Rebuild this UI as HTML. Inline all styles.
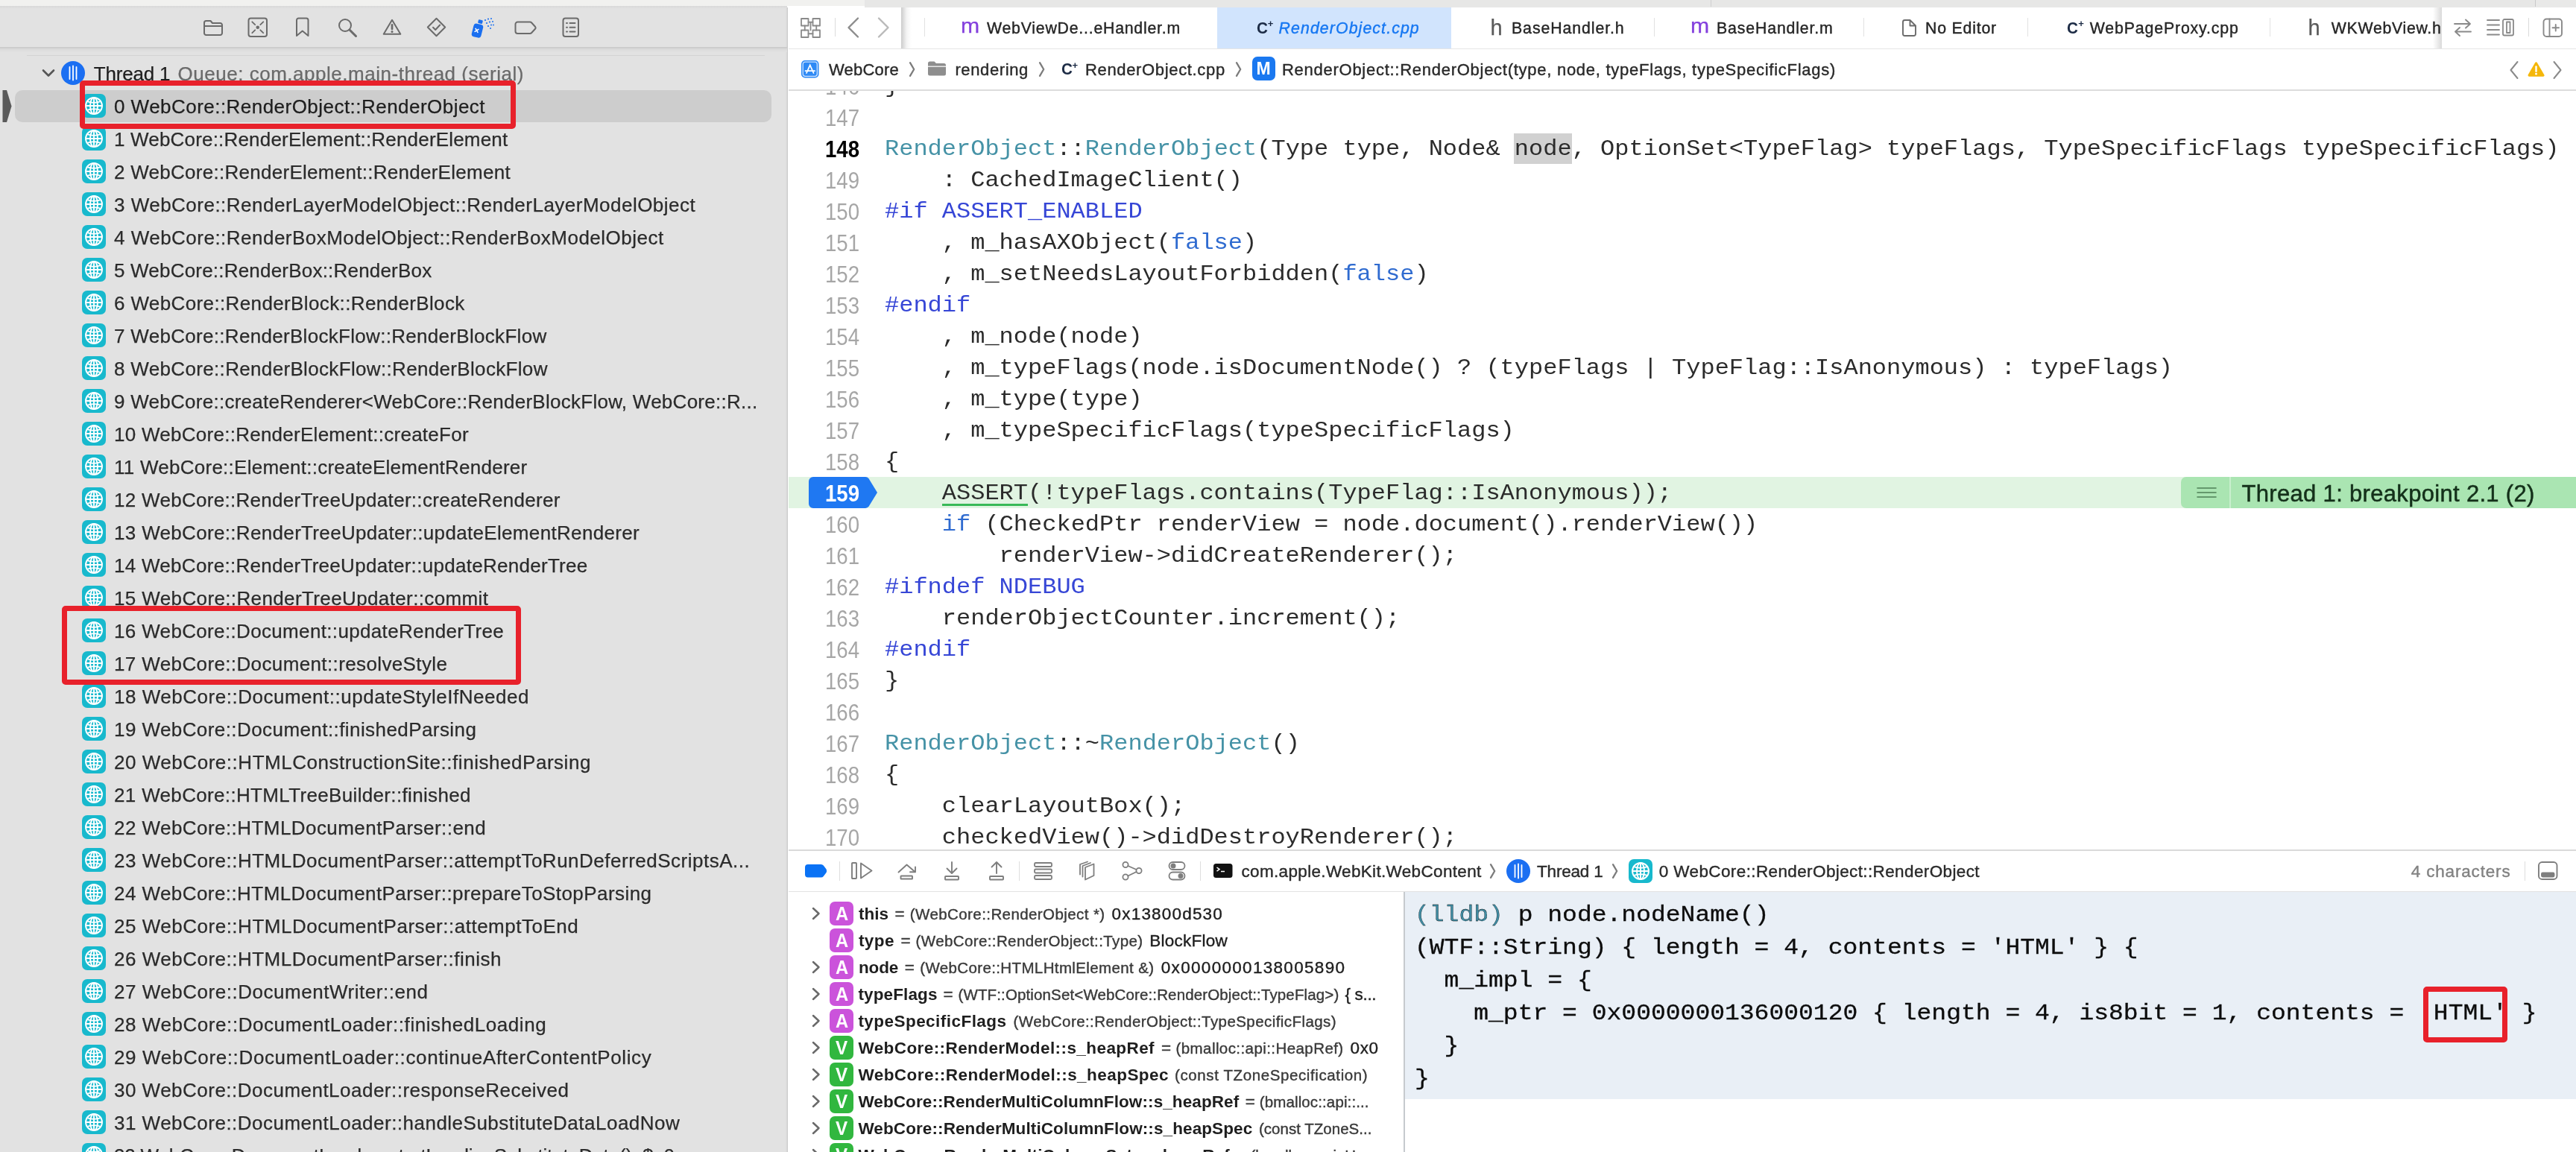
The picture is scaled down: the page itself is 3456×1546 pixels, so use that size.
<!DOCTYPE html>
<html lang="en"><head><meta charset="utf-8"><title>Xcode</title>
<style>
html,body{margin:0;padding:0;}
html{background:#fff;width:3456px;height:1546px;overflow:hidden;}
body{width:3456px;height:1546px;overflow:hidden;position:relative;font-family:'Liberation Sans', sans-serif;}
#root{position:absolute;left:0;top:0;width:3456px;height:1546px;overflow:hidden;background:transparent;will-change:transform;}
#root>div,#root>span,#root>svg{position:absolute;}
span{white-space:pre;display:block;}
span span{display:inline;position:static;}

.cl{left:1187.0px;font-family:'Liberation Mono',monospace;font-size:29px;line-height:36px;color:#2b2b2b;transform:scaleX(1.1033);transform-origin:left;}
.co{left:1897.7px;font-family:'Liberation Mono',monospace;font-size:29px;line-height:38px;color:#0d0d0d;transform:scaleX(1.1383);transform-origin:left;-webkit-text-stroke:0.3px #0d0d0d;}

.k{color:#2f6bd0}.p{color:#3646d6}.c{color:#4592a6}

</style></head><body><div id="root">
<div style="left:0px;top:0px;width:1160px;height:8px;background:#f1f1ef;"></div>
<div style="left:1160px;top:0px;width:2241px;height:10px;background:#e7e7e6;"></div>
<div style="left:3401px;top:0px;width:55px;height:10px;background:#e9e9e8;"></div>
<div style="left:3401px;top:0px;width:1px;height:9px;background:#c9c9c9;"></div>
<div style="left:2295px;top:0px;width:1px;height:9px;background:#d0d0d0;"></div>
<div style="left:0px;top:8px;width:1056px;height:1538px;background:#e2e2e2;"></div>
<div style="left:0px;top:8px;width:1056px;height:4px;background:linear-gradient(#d8d8d8,#e2e2e2);"></div>
<div style="left:1054px;top:10px;width:2px;height:1536px;background:linear-gradient(90deg,#e2e2e2,#d6d6d6);"></div>
<div style="left:1056px;top:10px;width:1px;height:1536px;background:#cbcbcb;"></div>
<div style="left:0px;top:63px;width:1056px;height:2px;background:#cdcdcd;"></div>
<div style="left:0px;top:65px;width:1056px;height:5px;background:linear-gradient(#d8d8d8,#e2e2e2);"></div>
<div style="left:36px;top:74px;width:990px;height:1px;background:#d3d3d3;"></div>
<svg style="left:272px;top:26px;" width="28" height="23" viewBox="0 0 28 23"><g fill="none" stroke="#6b6b6b" stroke-width="2.0" stroke-linecap="round" stroke-linejoin="round"><path d="M2 6.5 V18.5 a2.5 2.5 0 0 0 2.5 2.5 H23.5 a2.5 2.5 0 0 0 2.5 -2.5 V7.5 a2.5 2.5 0 0 0 -2.5 -2.5 H13 l-2.5 -3 H4.5 a2.5 2.5 0 0 0 -2.5 2.5 Z M2 9 H26"/></g></svg>
<svg style="left:332px;top:23px;" width="28" height="28" viewBox="0 0 28 28"><g fill="none" stroke="#6b6b6b" stroke-width="2.0" stroke-linecap="round" stroke-linejoin="round"><rect x="1.5" y="1.5" width="24.5" height="24.5" rx="3"/><path d="M6.3 6.3 l3.9 3.9 M21.2 6.3 l-3.9 3.9 M6.3 21.2 l3.9 -3.9 M21.2 21.2 l-3.9 -3.9" stroke-width="1.8"/><circle cx="13.75" cy="13.75" r="2.3" fill="#6b6b6b" stroke="none"/></g></svg>
<svg style="left:396px;top:23px;" width="20" height="28" viewBox="0 0 20 28"><g fill="none" stroke="#6b6b6b" stroke-width="2.0" stroke-linecap="round" stroke-linejoin="round"><path d="M2 4 a2.5 2.5 0 0 1 2.5 -2.5 H15 a2.5 2.5 0 0 1 2.5 2.5 V25 l-7.75 -6.5 L2 25 Z"/></g></svg>
<svg style="left:453px;top:24px;" width="27" height="27" viewBox="0 0 27 27"><g fill="none" stroke="#6b6b6b" stroke-width="2.0" stroke-linecap="round" stroke-linejoin="round"><circle cx="10" cy="10" r="8"/><path d="M16 16 l8.5 8.5" stroke-width="3"/></g></svg>
<svg style="left:513px;top:24px;" width="27" height="25" viewBox="0 0 27 25"><g fill="none" stroke="#6b6b6b" stroke-width="2.0" stroke-linecap="round" stroke-linejoin="round"><path d="M13 2.8 L24.3 21.8 H1.7 Z"/><path d="M13 9.3 v5.6" stroke-width="2.7"/><circle cx="13" cy="18.6" r="1.5" fill="#6b6b6b" stroke="none"/></g></svg>
<svg style="left:572px;top:23px;" width="28" height="28" viewBox="0 0 28 28"><g fill="none" stroke="#6b6b6b" stroke-width="2.0" stroke-linecap="round" stroke-linejoin="round"><path d="M13.5 1.8 L25.2 13.5 L13.5 25.2 L1.8 13.5 Z"/><path d="M9 13.8 l3.2 3.2 l6 -6.5"/></g></svg>
<svg style="left:631px;top:23px;" width="34" height="28" viewBox="0 0 34 28"><g fill="#1a6ff0"><rect x="3" y="9" width="13" height="18" rx="3.5" transform="rotate(14 9 18)"/><rect x="10.5" y="3.5" width="6" height="5" rx="1" transform="rotate(14 13 6)"/><circle cx="20" cy="4" r="1.1"/><circle cx="24" cy="2.5" r="1.1"/><circle cx="28" cy="2" r="1"/><circle cx="22" cy="8" r="1.1"/><circle cx="26" cy="6.5" r="1.1"/><circle cx="30" cy="6" r="1"/><circle cx="24" cy="12" r="1.1"/><circle cx="28" cy="10.5" r="1"/><circle cx="31" cy="10.5" r="0.9"/><circle cx="27" cy="15" r="1"/></g><path d="M6.5 16 l4 4 M10.5 16 l-4 4" stroke="#fff" stroke-width="1.6" stroke-linecap="round" transform="rotate(14 9 18)"/></svg>
<svg style="left:690px;top:28px;" width="32" height="19" viewBox="0 0 32 19"><g fill="none" stroke="#6b6b6b" stroke-width="2.0" stroke-linecap="round" stroke-linejoin="round"><path d="M4.5 1.5 H21 a3 3 0 0 1 2.2 1 l5 5.5 a2 2 0 0 1 0 2.5 l-5 5.5 a3 3 0 0 1 -2.2 1 H4.5 a3 3 0 0 1 -3 -3 V4.5 a3 3 0 0 1 3 -3 Z"/></g></svg>
<svg style="left:754px;top:23px;" width="26" height="28" viewBox="0 0 26 28"><g fill="none" stroke="#6b6b6b" stroke-width="2.0" stroke-linecap="round" stroke-linejoin="round"><rect x="1.5" y="1.5" width="20.5" height="24.5" rx="3"/><path d="M6 8 h1 M10.5 8 h7 M6 13.75 h1 M10.5 13.75 h7 M6 19.5 h1 M10.5 19.5 h7"/></g></svg>
<svg style="left:55px;top:90px;" width="20" height="16" viewBox="0 0 20 16"><g fill="none" stroke="#555" stroke-width="2.6" stroke-linecap="round" stroke-linejoin="round"><path d="M3 4.5 l7 7 l7 -7"/></g></svg>
<svg style="left:82px;top:82.4px;" width="32" height="32" viewBox="0 0 32 32"><circle cx="16" cy="16" r="16" fill="#1b6ff2"/><path d="M11.5 8 v16 M16 6.5 v19 M20.5 8 v16" stroke="#fff" stroke-width="1.8" stroke-linecap="round"/></svg>
<span style="left:125.8px;top:81.5px;font-size:26px;line-height:34px;color:#1e1e1e;letter-spacing:-0.197px;-webkit-text-stroke:0.25px;">Thread 1</span>
<span style="left:238.5px;top:81.5px;font-size:26px;line-height:34px;color:#6a6a6a;letter-spacing:0.524px;-webkit-text-stroke:0.25px;">Queue: com.apple.main-thread (serial)</span>
<div style="left:20px;top:120.5px;width:1015px;height:43.5px;background:#cdcdcd;border-radius:10px;"></div>
<svg style="left:2px;top:120px;" width="16" height="45" viewBox="0 0 16 45"><path d="M1.5 1 H7 L13.5 22.5 L7 44 H1.5 Z" fill="#5a5a5a"/></svg>
<svg style="left:110px;top:126.4px;" width="32" height="32" viewBox="0 0 32 32"><rect width="32" height="32" rx="7" fill="#18b9cd"/><g fill="none" stroke="#fff" stroke-width="1.9"><circle cx="16" cy="16" r="11"/><ellipse cx="16" cy="16" rx="5" ry="11"/><path d="M5 16 H27 M16 5 V27 M7 10.2 Q16 13.6 25 10.2 M7 21.8 Q16 18.4 25 21.8"/></g></svg>
<span style="left:153.0px;top:125.5px;font-size:26px;line-height:34px;color:#1e1e1e;letter-spacing:0.466px;-webkit-text-stroke:0.25px;">0 WebCore::RenderObject::RenderObject</span>
<svg style="left:110px;top:170.4px;" width="32" height="32" viewBox="0 0 32 32"><rect width="32" height="32" rx="7" fill="#18b9cd"/><g fill="none" stroke="#fff" stroke-width="1.9"><circle cx="16" cy="16" r="11"/><ellipse cx="16" cy="16" rx="5" ry="11"/><path d="M5 16 H27 M16 5 V27 M7 10.2 Q16 13.6 25 10.2 M7 21.8 Q16 18.4 25 21.8"/></g></svg>
<span style="left:153.0px;top:169.5px;font-size:26px;line-height:34px;color:#2b2b2b;letter-spacing:0.184px;-webkit-text-stroke:0.25px;">1 WebCore::RenderElement::RenderElement</span>
<svg style="left:110px;top:214.4px;" width="32" height="32" viewBox="0 0 32 32"><rect width="32" height="32" rx="7" fill="#18b9cd"/><g fill="none" stroke="#fff" stroke-width="1.9"><circle cx="16" cy="16" r="11"/><ellipse cx="16" cy="16" rx="5" ry="11"/><path d="M5 16 H27 M16 5 V27 M7 10.2 Q16 13.6 25 10.2 M7 21.8 Q16 18.4 25 21.8"/></g></svg>
<span style="left:153.0px;top:213.5px;font-size:26px;line-height:34px;color:#2b2b2b;letter-spacing:0.273px;-webkit-text-stroke:0.25px;">2 WebCore::RenderElement::RenderElement</span>
<svg style="left:110px;top:258.4px;" width="32" height="32" viewBox="0 0 32 32"><rect width="32" height="32" rx="7" fill="#18b9cd"/><g fill="none" stroke="#fff" stroke-width="1.9"><circle cx="16" cy="16" r="11"/><ellipse cx="16" cy="16" rx="5" ry="11"/><path d="M5 16 H27 M16 5 V27 M7 10.2 Q16 13.6 25 10.2 M7 21.8 Q16 18.4 25 21.8"/></g></svg>
<span style="left:153.0px;top:257.5px;font-size:26px;line-height:34px;color:#2b2b2b;letter-spacing:0.487px;-webkit-text-stroke:0.25px;">3 WebCore::RenderLayerModelObject::RenderLayerModelObject</span>
<svg style="left:110px;top:302.4px;" width="32" height="32" viewBox="0 0 32 32"><rect width="32" height="32" rx="7" fill="#18b9cd"/><g fill="none" stroke="#fff" stroke-width="1.9"><circle cx="16" cy="16" r="11"/><ellipse cx="16" cy="16" rx="5" ry="11"/><path d="M5 16 H27 M16 5 V27 M7 10.2 Q16 13.6 25 10.2 M7 21.8 Q16 18.4 25 21.8"/></g></svg>
<span style="left:153.0px;top:301.5px;font-size:26px;line-height:34px;color:#2b2b2b;letter-spacing:0.483px;-webkit-text-stroke:0.25px;">4 WebCore::RenderBoxModelObject::RenderBoxModelObject</span>
<svg style="left:110px;top:346.4px;" width="32" height="32" viewBox="0 0 32 32"><rect width="32" height="32" rx="7" fill="#18b9cd"/><g fill="none" stroke="#fff" stroke-width="1.9"><circle cx="16" cy="16" r="11"/><ellipse cx="16" cy="16" rx="5" ry="11"/><path d="M5 16 H27 M16 5 V27 M7 10.2 Q16 13.6 25 10.2 M7 21.8 Q16 18.4 25 21.8"/></g></svg>
<span style="left:153.0px;top:345.5px;font-size:26px;line-height:34px;color:#2b2b2b;letter-spacing:0.204px;-webkit-text-stroke:0.25px;">5 WebCore::RenderBox::RenderBox</span>
<svg style="left:110px;top:390.4px;" width="32" height="32" viewBox="0 0 32 32"><rect width="32" height="32" rx="7" fill="#18b9cd"/><g fill="none" stroke="#fff" stroke-width="1.9"><circle cx="16" cy="16" r="11"/><ellipse cx="16" cy="16" rx="5" ry="11"/><path d="M5 16 H27 M16 5 V27 M7 10.2 Q16 13.6 25 10.2 M7 21.8 Q16 18.4 25 21.8"/></g></svg>
<span style="left:153.0px;top:389.5px;font-size:26px;line-height:34px;color:#2b2b2b;letter-spacing:0.373px;-webkit-text-stroke:0.25px;">6 WebCore::RenderBlock::RenderBlock</span>
<svg style="left:110px;top:434.4px;" width="32" height="32" viewBox="0 0 32 32"><rect width="32" height="32" rx="7" fill="#18b9cd"/><g fill="none" stroke="#fff" stroke-width="1.9"><circle cx="16" cy="16" r="11"/><ellipse cx="16" cy="16" rx="5" ry="11"/><path d="M5 16 H27 M16 5 V27 M7 10.2 Q16 13.6 25 10.2 M7 21.8 Q16 18.4 25 21.8"/></g></svg>
<span style="left:153.0px;top:433.5px;font-size:26px;line-height:34px;color:#2b2b2b;letter-spacing:0.304px;-webkit-text-stroke:0.25px;">7 WebCore::RenderBlockFlow::RenderBlockFlow</span>
<svg style="left:110px;top:478.4px;" width="32" height="32" viewBox="0 0 32 32"><rect width="32" height="32" rx="7" fill="#18b9cd"/><g fill="none" stroke="#fff" stroke-width="1.9"><circle cx="16" cy="16" r="11"/><ellipse cx="16" cy="16" rx="5" ry="11"/><path d="M5 16 H27 M16 5 V27 M7 10.2 Q16 13.6 25 10.2 M7 21.8 Q16 18.4 25 21.8"/></g></svg>
<span style="left:153.0px;top:477.5px;font-size:26px;line-height:34px;color:#2b2b2b;letter-spacing:0.334px;-webkit-text-stroke:0.25px;">8 WebCore::RenderBlockFlow::RenderBlockFlow</span>
<svg style="left:110px;top:522.4px;" width="32" height="32" viewBox="0 0 32 32"><rect width="32" height="32" rx="7" fill="#18b9cd"/><g fill="none" stroke="#fff" stroke-width="1.9"><circle cx="16" cy="16" r="11"/><ellipse cx="16" cy="16" rx="5" ry="11"/><path d="M5 16 H27 M16 5 V27 M7 10.2 Q16 13.6 25 10.2 M7 21.8 Q16 18.4 25 21.8"/></g></svg>
<span style="left:153.0px;top:521.5px;font-size:26px;line-height:34px;color:#2b2b2b;letter-spacing:0.268px;-webkit-text-stroke:0.25px;">9 WebCore::createRenderer&lt;WebCore::RenderBlockFlow, WebCore::R...</span>
<svg style="left:110px;top:566.4px;" width="32" height="32" viewBox="0 0 32 32"><rect width="32" height="32" rx="7" fill="#18b9cd"/><g fill="none" stroke="#fff" stroke-width="1.9"><circle cx="16" cy="16" r="11"/><ellipse cx="16" cy="16" rx="5" ry="11"/><path d="M5 16 H27 M16 5 V27 M7 10.2 Q16 13.6 25 10.2 M7 21.8 Q16 18.4 25 21.8"/></g></svg>
<span style="left:153.0px;top:565.5px;font-size:26px;line-height:34px;color:#2b2b2b;letter-spacing:0.266px;-webkit-text-stroke:0.25px;">10 WebCore::RenderElement::createFor</span>
<svg style="left:110px;top:610.4px;" width="32" height="32" viewBox="0 0 32 32"><rect width="32" height="32" rx="7" fill="#18b9cd"/><g fill="none" stroke="#fff" stroke-width="1.9"><circle cx="16" cy="16" r="11"/><ellipse cx="16" cy="16" rx="5" ry="11"/><path d="M5 16 H27 M16 5 V27 M7 10.2 Q16 13.6 25 10.2 M7 21.8 Q16 18.4 25 21.8"/></g></svg>
<span style="left:153.0px;top:609.5px;font-size:26px;line-height:34px;color:#2b2b2b;letter-spacing:0.253px;-webkit-text-stroke:0.25px;">11 WebCore::Element::createElementRenderer</span>
<svg style="left:110px;top:654.4px;" width="32" height="32" viewBox="0 0 32 32"><rect width="32" height="32" rx="7" fill="#18b9cd"/><g fill="none" stroke="#fff" stroke-width="1.9"><circle cx="16" cy="16" r="11"/><ellipse cx="16" cy="16" rx="5" ry="11"/><path d="M5 16 H27 M16 5 V27 M7 10.2 Q16 13.6 25 10.2 M7 21.8 Q16 18.4 25 21.8"/></g></svg>
<span style="left:153.0px;top:653.5px;font-size:26px;line-height:34px;color:#2b2b2b;letter-spacing:0.298px;-webkit-text-stroke:0.25px;">12 WebCore::RenderTreeUpdater::createRenderer</span>
<svg style="left:110px;top:698.4px;" width="32" height="32" viewBox="0 0 32 32"><rect width="32" height="32" rx="7" fill="#18b9cd"/><g fill="none" stroke="#fff" stroke-width="1.9"><circle cx="16" cy="16" r="11"/><ellipse cx="16" cy="16" rx="5" ry="11"/><path d="M5 16 H27 M16 5 V27 M7 10.2 Q16 13.6 25 10.2 M7 21.8 Q16 18.4 25 21.8"/></g></svg>
<span style="left:153.0px;top:697.5px;font-size:26px;line-height:34px;color:#2b2b2b;letter-spacing:0.328px;-webkit-text-stroke:0.25px;">13 WebCore::RenderTreeUpdater::updateElementRenderer</span>
<svg style="left:110px;top:742.4px;" width="32" height="32" viewBox="0 0 32 32"><rect width="32" height="32" rx="7" fill="#18b9cd"/><g fill="none" stroke="#fff" stroke-width="1.9"><circle cx="16" cy="16" r="11"/><ellipse cx="16" cy="16" rx="5" ry="11"/><path d="M5 16 H27 M16 5 V27 M7 10.2 Q16 13.6 25 10.2 M7 21.8 Q16 18.4 25 21.8"/></g></svg>
<span style="left:153.0px;top:741.5px;font-size:26px;line-height:34px;color:#2b2b2b;letter-spacing:0.290px;-webkit-text-stroke:0.25px;">14 WebCore::RenderTreeUpdater::updateRenderTree</span>
<svg style="left:110px;top:786.4px;" width="32" height="32" viewBox="0 0 32 32"><rect width="32" height="32" rx="7" fill="#18b9cd"/><g fill="none" stroke="#fff" stroke-width="1.9"><circle cx="16" cy="16" r="11"/><ellipse cx="16" cy="16" rx="5" ry="11"/><path d="M5 16 H27 M16 5 V27 M7 10.2 Q16 13.6 25 10.2 M7 21.8 Q16 18.4 25 21.8"/></g></svg>
<span style="left:153.0px;top:785.5px;font-size:26px;line-height:34px;color:#2b2b2b;letter-spacing:0.377px;-webkit-text-stroke:0.25px;">15 WebCore::RenderTreeUpdater::commit</span>
<svg style="left:110px;top:830.4px;" width="32" height="32" viewBox="0 0 32 32"><rect width="32" height="32" rx="7" fill="#18b9cd"/><g fill="none" stroke="#fff" stroke-width="1.9"><circle cx="16" cy="16" r="11"/><ellipse cx="16" cy="16" rx="5" ry="11"/><path d="M5 16 H27 M16 5 V27 M7 10.2 Q16 13.6 25 10.2 M7 21.8 Q16 18.4 25 21.8"/></g></svg>
<span style="left:153.0px;top:829.5px;font-size:26px;line-height:34px;color:#2b2b2b;letter-spacing:0.342px;-webkit-text-stroke:0.25px;">16 WebCore::Document::updateRenderTree</span>
<svg style="left:110px;top:874.4px;" width="32" height="32" viewBox="0 0 32 32"><rect width="32" height="32" rx="7" fill="#18b9cd"/><g fill="none" stroke="#fff" stroke-width="1.9"><circle cx="16" cy="16" r="11"/><ellipse cx="16" cy="16" rx="5" ry="11"/><path d="M5 16 H27 M16 5 V27 M7 10.2 Q16 13.6 25 10.2 M7 21.8 Q16 18.4 25 21.8"/></g></svg>
<span style="left:153.0px;top:873.5px;font-size:26px;line-height:34px;color:#2b2b2b;letter-spacing:0.376px;-webkit-text-stroke:0.25px;">17 WebCore::Document::resolveStyle</span>
<svg style="left:110px;top:918.4px;" width="32" height="32" viewBox="0 0 32 32"><rect width="32" height="32" rx="7" fill="#18b9cd"/><g fill="none" stroke="#fff" stroke-width="1.9"><circle cx="16" cy="16" r="11"/><ellipse cx="16" cy="16" rx="5" ry="11"/><path d="M5 16 H27 M16 5 V27 M7 10.2 Q16 13.6 25 10.2 M7 21.8 Q16 18.4 25 21.8"/></g></svg>
<span style="left:153.0px;top:917.5px;font-size:26px;line-height:34px;color:#2b2b2b;letter-spacing:0.519px;-webkit-text-stroke:0.25px;">18 WebCore::Document::updateStyleIfNeeded</span>
<svg style="left:110px;top:962.4px;" width="32" height="32" viewBox="0 0 32 32"><rect width="32" height="32" rx="7" fill="#18b9cd"/><g fill="none" stroke="#fff" stroke-width="1.9"><circle cx="16" cy="16" r="11"/><ellipse cx="16" cy="16" rx="5" ry="11"/><path d="M5 16 H27 M16 5 V27 M7 10.2 Q16 13.6 25 10.2 M7 21.8 Q16 18.4 25 21.8"/></g></svg>
<span style="left:153.0px;top:961.5px;font-size:26px;line-height:34px;color:#2b2b2b;letter-spacing:0.423px;-webkit-text-stroke:0.25px;">19 WebCore::Document::finishedParsing</span>
<svg style="left:110px;top:1006.4px;" width="32" height="32" viewBox="0 0 32 32"><rect width="32" height="32" rx="7" fill="#18b9cd"/><g fill="none" stroke="#fff" stroke-width="1.9"><circle cx="16" cy="16" r="11"/><ellipse cx="16" cy="16" rx="5" ry="11"/><path d="M5 16 H27 M16 5 V27 M7 10.2 Q16 13.6 25 10.2 M7 21.8 Q16 18.4 25 21.8"/></g></svg>
<span style="left:153.0px;top:1005.5px;font-size:26px;line-height:34px;color:#2b2b2b;letter-spacing:0.535px;-webkit-text-stroke:0.25px;">20 WebCore::HTMLConstructionSite::finishedParsing</span>
<svg style="left:110px;top:1050.4px;" width="32" height="32" viewBox="0 0 32 32"><rect width="32" height="32" rx="7" fill="#18b9cd"/><g fill="none" stroke="#fff" stroke-width="1.9"><circle cx="16" cy="16" r="11"/><ellipse cx="16" cy="16" rx="5" ry="11"/><path d="M5 16 H27 M16 5 V27 M7 10.2 Q16 13.6 25 10.2 M7 21.8 Q16 18.4 25 21.8"/></g></svg>
<span style="left:153.0px;top:1049.5px;font-size:26px;line-height:34px;color:#2b2b2b;letter-spacing:0.338px;-webkit-text-stroke:0.25px;">21 WebCore::HTMLTreeBuilder::finished</span>
<svg style="left:110px;top:1094.4px;" width="32" height="32" viewBox="0 0 32 32"><rect width="32" height="32" rx="7" fill="#18b9cd"/><g fill="none" stroke="#fff" stroke-width="1.9"><circle cx="16" cy="16" r="11"/><ellipse cx="16" cy="16" rx="5" ry="11"/><path d="M5 16 H27 M16 5 V27 M7 10.2 Q16 13.6 25 10.2 M7 21.8 Q16 18.4 25 21.8"/></g></svg>
<span style="left:153.0px;top:1093.5px;font-size:26px;line-height:34px;color:#2b2b2b;letter-spacing:0.442px;-webkit-text-stroke:0.25px;">22 WebCore::HTMLDocumentParser::end</span>
<svg style="left:110px;top:1138.4px;" width="32" height="32" viewBox="0 0 32 32"><rect width="32" height="32" rx="7" fill="#18b9cd"/><g fill="none" stroke="#fff" stroke-width="1.9"><circle cx="16" cy="16" r="11"/><ellipse cx="16" cy="16" rx="5" ry="11"/><path d="M5 16 H27 M16 5 V27 M7 10.2 Q16 13.6 25 10.2 M7 21.8 Q16 18.4 25 21.8"/></g></svg>
<span style="left:153.0px;top:1137.5px;font-size:26px;line-height:34px;color:#2b2b2b;letter-spacing:0.499px;-webkit-text-stroke:0.25px;">23 WebCore::HTMLDocumentParser::attemptToRunDeferredScriptsA...</span>
<svg style="left:110px;top:1182.4px;" width="32" height="32" viewBox="0 0 32 32"><rect width="32" height="32" rx="7" fill="#18b9cd"/><g fill="none" stroke="#fff" stroke-width="1.9"><circle cx="16" cy="16" r="11"/><ellipse cx="16" cy="16" rx="5" ry="11"/><path d="M5 16 H27 M16 5 V27 M7 10.2 Q16 13.6 25 10.2 M7 21.8 Q16 18.4 25 21.8"/></g></svg>
<span style="left:153.0px;top:1181.5px;font-size:26px;line-height:34px;color:#2b2b2b;letter-spacing:0.432px;-webkit-text-stroke:0.25px;">24 WebCore::HTMLDocumentParser::prepareToStopParsing</span>
<svg style="left:110px;top:1226.4px;" width="32" height="32" viewBox="0 0 32 32"><rect width="32" height="32" rx="7" fill="#18b9cd"/><g fill="none" stroke="#fff" stroke-width="1.9"><circle cx="16" cy="16" r="11"/><ellipse cx="16" cy="16" rx="5" ry="11"/><path d="M5 16 H27 M16 5 V27 M7 10.2 Q16 13.6 25 10.2 M7 21.8 Q16 18.4 25 21.8"/></g></svg>
<span style="left:153.0px;top:1225.5px;font-size:26px;line-height:34px;color:#2b2b2b;letter-spacing:0.514px;-webkit-text-stroke:0.25px;">25 WebCore::HTMLDocumentParser::attemptToEnd</span>
<svg style="left:110px;top:1270.4px;" width="32" height="32" viewBox="0 0 32 32"><rect width="32" height="32" rx="7" fill="#18b9cd"/><g fill="none" stroke="#fff" stroke-width="1.9"><circle cx="16" cy="16" r="11"/><ellipse cx="16" cy="16" rx="5" ry="11"/><path d="M5 16 H27 M16 5 V27 M7 10.2 Q16 13.6 25 10.2 M7 21.8 Q16 18.4 25 21.8"/></g></svg>
<span style="left:153.0px;top:1269.5px;font-size:26px;line-height:34px;color:#2b2b2b;letter-spacing:0.502px;-webkit-text-stroke:0.25px;">26 WebCore::HTMLDocumentParser::finish</span>
<svg style="left:110px;top:1314.4px;" width="32" height="32" viewBox="0 0 32 32"><rect width="32" height="32" rx="7" fill="#18b9cd"/><g fill="none" stroke="#fff" stroke-width="1.9"><circle cx="16" cy="16" r="11"/><ellipse cx="16" cy="16" rx="5" ry="11"/><path d="M5 16 H27 M16 5 V27 M7 10.2 Q16 13.6 25 10.2 M7 21.8 Q16 18.4 25 21.8"/></g></svg>
<span style="left:153.0px;top:1313.5px;font-size:26px;line-height:34px;color:#2b2b2b;letter-spacing:0.526px;-webkit-text-stroke:0.25px;">27 WebCore::DocumentWriter::end</span>
<svg style="left:110px;top:1358.4px;" width="32" height="32" viewBox="0 0 32 32"><rect width="32" height="32" rx="7" fill="#18b9cd"/><g fill="none" stroke="#fff" stroke-width="1.9"><circle cx="16" cy="16" r="11"/><ellipse cx="16" cy="16" rx="5" ry="11"/><path d="M5 16 H27 M16 5 V27 M7 10.2 Q16 13.6 25 10.2 M7 21.8 Q16 18.4 25 21.8"/></g></svg>
<span style="left:153.0px;top:1357.5px;font-size:26px;line-height:34px;color:#2b2b2b;letter-spacing:0.563px;-webkit-text-stroke:0.25px;">28 WebCore::DocumentLoader::finishedLoading</span>
<svg style="left:110px;top:1402.4px;" width="32" height="32" viewBox="0 0 32 32"><rect width="32" height="32" rx="7" fill="#18b9cd"/><g fill="none" stroke="#fff" stroke-width="1.9"><circle cx="16" cy="16" r="11"/><ellipse cx="16" cy="16" rx="5" ry="11"/><path d="M5 16 H27 M16 5 V27 M7 10.2 Q16 13.6 25 10.2 M7 21.8 Q16 18.4 25 21.8"/></g></svg>
<span style="left:153.0px;top:1401.5px;font-size:26px;line-height:34px;color:#2b2b2b;letter-spacing:0.628px;-webkit-text-stroke:0.25px;">29 WebCore::DocumentLoader::continueAfterContentPolicy</span>
<svg style="left:110px;top:1446.4px;" width="32" height="32" viewBox="0 0 32 32"><rect width="32" height="32" rx="7" fill="#18b9cd"/><g fill="none" stroke="#fff" stroke-width="1.9"><circle cx="16" cy="16" r="11"/><ellipse cx="16" cy="16" rx="5" ry="11"/><path d="M5 16 H27 M16 5 V27 M7 10.2 Q16 13.6 25 10.2 M7 21.8 Q16 18.4 25 21.8"/></g></svg>
<span style="left:153.0px;top:1445.5px;font-size:26px;line-height:34px;color:#2b2b2b;letter-spacing:0.484px;-webkit-text-stroke:0.25px;">30 WebCore::DocumentLoader::responseReceived</span>
<svg style="left:110px;top:1490.4px;" width="32" height="32" viewBox="0 0 32 32"><rect width="32" height="32" rx="7" fill="#18b9cd"/><g fill="none" stroke="#fff" stroke-width="1.9"><circle cx="16" cy="16" r="11"/><ellipse cx="16" cy="16" rx="5" ry="11"/><path d="M5 16 H27 M16 5 V27 M7 10.2 Q16 13.6 25 10.2 M7 21.8 Q16 18.4 25 21.8"/></g></svg>
<span style="left:153.0px;top:1489.5px;font-size:26px;line-height:34px;color:#2b2b2b;letter-spacing:0.490px;-webkit-text-stroke:0.25px;">31 WebCore::DocumentLoader::handleSubstituteDataLoadNow</span>
<svg style="left:110px;top:1534.4px;" width="32" height="32" viewBox="0 0 32 32"><rect width="32" height="32" rx="7" fill="#18b9cd"/><g fill="none" stroke="#fff" stroke-width="1.9"><circle cx="16" cy="16" r="11"/><ellipse cx="16" cy="16" rx="5" ry="11"/><path d="M5 16 H27 M16 5 V27 M7 10.2 Q16 13.6 25 10.2 M7 21.8 Q16 18.4 25 21.8"/></g></svg>
<span style="left:153.0px;top:1533.5px;font-size:26px;line-height:34px;color:#2b2b2b;letter-spacing:-0.177px;-webkit-text-stroke:0.25px;">32 WebCore::DocumentLoader::startLoadingSubstituteData()::$_0::oper...</span>
<div style="left:107px;top:108px;width:571.1px;height:51.29999999999999px;border:7.2px solid #e8212b;border-radius:5px;"></div>
<div style="left:82.5px;top:812.5px;width:602.3px;height:92.29999999999995px;border:7px solid #e8212b;border-radius:5px;"></div>
<div style="left:1058px;top:640px;width:2398px;height:42px;background:#e1f4e2;"></div>
<svg style="left:1085px;top:640px;" width="93" height="42" viewBox="0 0 93 42"><path d="M6 0 H76 a6 6 0 0 1 4.5 2.2 L92 21 L80.5 39.8 a6 6 0 0 1 -4.5 2.2 H6 a6 6 0 0 1 -6 -6 V6 a6 6 0 0 1 6 -6 Z" fill="#1f78f2"/></svg>
<div style="left:2030.5px;top:178.5px;width:78.5px;height:41px;background:#d1d1d1;"></div>
<span style="left:1053px;width:100px;text-align:right;top:97.0px;font-size:31.8px;line-height:38px;color:#a6a6a6;font-weight:400;transform:scaleX(0.868);transform-origin:right;">146</span>
<span class="cl" style="top:99.3px;">}</span>
<span style="left:1053px;width:100px;text-align:right;top:139.0px;font-size:31.8px;line-height:38px;color:#a6a6a6;font-weight:400;transform:scaleX(0.868);transform-origin:right;">147</span>
<span style="left:1053px;width:100px;text-align:right;top:181.0px;font-size:31.8px;line-height:38px;color:#000;font-weight:700;transform:scaleX(0.868);transform-origin:right;">148</span>
<span class="cl" style="top:183.3px;"><span class="c">RenderObject</span>::<span class="c">RenderObject</span>(Type type, Node&amp; node, OptionSet&lt;TypeFlag&gt; typeFlags, TypeSpecificFlags typeSpecificFlags)</span>
<span style="left:1053px;width:100px;text-align:right;top:223.0px;font-size:31.8px;line-height:38px;color:#a6a6a6;font-weight:400;transform:scaleX(0.868);transform-origin:right;">149</span>
<span class="cl" style="top:225.3px;">    : CachedImageClient()</span>
<span style="left:1053px;width:100px;text-align:right;top:265.0px;font-size:31.8px;line-height:38px;color:#a6a6a6;font-weight:400;transform:scaleX(0.868);transform-origin:right;">150</span>
<span class="cl" style="top:267.3px;"><span class="p">#if ASSERT_ENABLED</span></span>
<span style="left:1053px;width:100px;text-align:right;top:307.0px;font-size:31.8px;line-height:38px;color:#a6a6a6;font-weight:400;transform:scaleX(0.868);transform-origin:right;">151</span>
<span class="cl" style="top:309.3px;">    , m_hasAXObject(<span class="k">false</span>)</span>
<span style="left:1053px;width:100px;text-align:right;top:349.0px;font-size:31.8px;line-height:38px;color:#a6a6a6;font-weight:400;transform:scaleX(0.868);transform-origin:right;">152</span>
<span class="cl" style="top:351.3px;">    , m_setNeedsLayoutForbidden(<span class="k">false</span>)</span>
<span style="left:1053px;width:100px;text-align:right;top:391.0px;font-size:31.8px;line-height:38px;color:#a6a6a6;font-weight:400;transform:scaleX(0.868);transform-origin:right;">153</span>
<span class="cl" style="top:393.3px;"><span class="p">#endif</span></span>
<span style="left:1053px;width:100px;text-align:right;top:433.0px;font-size:31.8px;line-height:38px;color:#a6a6a6;font-weight:400;transform:scaleX(0.868);transform-origin:right;">154</span>
<span class="cl" style="top:435.3px;">    , m_node(node)</span>
<span style="left:1053px;width:100px;text-align:right;top:475.0px;font-size:31.8px;line-height:38px;color:#a6a6a6;font-weight:400;transform:scaleX(0.868);transform-origin:right;">155</span>
<span class="cl" style="top:477.3px;">    , m_typeFlags(node.isDocumentNode() ? (typeFlags | TypeFlag::IsAnonymous) : typeFlags)</span>
<span style="left:1053px;width:100px;text-align:right;top:517.0px;font-size:31.8px;line-height:38px;color:#a6a6a6;font-weight:400;transform:scaleX(0.868);transform-origin:right;">156</span>
<span class="cl" style="top:519.3px;">    , m_type(type)</span>
<span style="left:1053px;width:100px;text-align:right;top:559.0px;font-size:31.8px;line-height:38px;color:#a6a6a6;font-weight:400;transform:scaleX(0.868);transform-origin:right;">157</span>
<span class="cl" style="top:561.3px;">    , m_typeSpecificFlags(typeSpecificFlags)</span>
<span style="left:1053px;width:100px;text-align:right;top:601.0px;font-size:31.8px;line-height:38px;color:#a6a6a6;font-weight:400;transform:scaleX(0.868);transform-origin:right;">158</span>
<span class="cl" style="top:603.3px;">{</span>
<span style="left:1053px;width:100px;text-align:right;top:643.0px;font-size:31.8px;line-height:38px;color:#fff;font-weight:700;transform:scaleX(0.868);transform-origin:right;">159</span>
<span class="cl" style="top:645.3px;">    ASSERT(!typeFlags.contains(TypeFlag::IsAnonymous));</span>
<span style="left:1053px;width:100px;text-align:right;top:685.0px;font-size:31.8px;line-height:38px;color:#a6a6a6;font-weight:400;transform:scaleX(0.868);transform-origin:right;">160</span>
<span class="cl" style="top:687.3px;">    <span class="k">if</span> (CheckedPtr renderView = node.document().renderView())</span>
<span style="left:1053px;width:100px;text-align:right;top:727.0px;font-size:31.8px;line-height:38px;color:#a6a6a6;font-weight:400;transform:scaleX(0.868);transform-origin:right;">161</span>
<span class="cl" style="top:729.3px;">        renderView-&gt;didCreateRenderer();</span>
<span style="left:1053px;width:100px;text-align:right;top:769.0px;font-size:31.8px;line-height:38px;color:#a6a6a6;font-weight:400;transform:scaleX(0.868);transform-origin:right;">162</span>
<span class="cl" style="top:771.3px;"><span class="p">#ifndef NDEBUG</span></span>
<span style="left:1053px;width:100px;text-align:right;top:811.0px;font-size:31.8px;line-height:38px;color:#a6a6a6;font-weight:400;transform:scaleX(0.868);transform-origin:right;">163</span>
<span class="cl" style="top:813.3px;">    renderObjectCounter.increment();</span>
<span style="left:1053px;width:100px;text-align:right;top:853.0px;font-size:31.8px;line-height:38px;color:#a6a6a6;font-weight:400;transform:scaleX(0.868);transform-origin:right;">164</span>
<span class="cl" style="top:855.3px;"><span class="p">#endif</span></span>
<span style="left:1053px;width:100px;text-align:right;top:895.0px;font-size:31.8px;line-height:38px;color:#a6a6a6;font-weight:400;transform:scaleX(0.868);transform-origin:right;">165</span>
<span class="cl" style="top:897.3px;">}</span>
<span style="left:1053px;width:100px;text-align:right;top:937.0px;font-size:31.8px;line-height:38px;color:#a6a6a6;font-weight:400;transform:scaleX(0.868);transform-origin:right;">166</span>
<span style="left:1053px;width:100px;text-align:right;top:979.0px;font-size:31.8px;line-height:38px;color:#a6a6a6;font-weight:400;transform:scaleX(0.868);transform-origin:right;">167</span>
<span class="cl" style="top:981.3px;"><span class="c">RenderObject</span>::~<span class="c">RenderObject</span>()</span>
<span style="left:1053px;width:100px;text-align:right;top:1021.0px;font-size:31.8px;line-height:38px;color:#a6a6a6;font-weight:400;transform:scaleX(0.868);transform-origin:right;">168</span>
<span class="cl" style="top:1023.3px;">{</span>
<span style="left:1053px;width:100px;text-align:right;top:1063.0px;font-size:31.8px;line-height:38px;color:#a6a6a6;font-weight:400;transform:scaleX(0.868);transform-origin:right;">169</span>
<span class="cl" style="top:1065.3px;">    clearLayoutBox();</span>
<span style="left:1053px;width:100px;text-align:right;top:1105.0px;font-size:31.8px;line-height:38px;color:#a6a6a6;font-weight:400;transform:scaleX(0.868);transform-origin:right;">170</span>
<span class="cl" style="top:1107.3px;">    checkedView()-&gt;didDestroyRenderer();</span>
<div style="left:1264.3px;top:676px;width:114.6px;height:2.7px;background:#38b957;"></div>
<div style="left:1058px;top:66.5px;width:2398px;height:53.5px;background:#fff;z-index:0;"></div>
<div style="left:1057px;top:10px;width:2399px;height:55px;background:#fff;"></div>
<div style="left:1058px;top:10px;width:151px;height:55px;background:#fff;"></div>
<div style="left:1209px;top:10px;width:14px;height:55px;background:linear-gradient(90deg,rgba(0,0,0,0.2),rgba(0,0,0,0.04) 55%,rgba(0,0,0,0));"></div>
<div style="left:1633px;top:10px;width:313.7px;height:55px;background:#d1e4fd;"></div>
<div style="left:1058px;top:64.5px;width:2398px;height:1.5px;background:#e6e6e6;"></div>
<svg style="left:1073px;top:23px;" width="30" height="29" viewBox="0 0 30 29"><g fill="none" stroke="#8a8a8a" stroke-width="1.8" stroke-linecap="round" stroke-linejoin="round"><rect x="2" y="2" width="9.5" height="9.5"/><rect x="17.5" y="2" width="9.5" height="9.5"/><rect x="2" y="17.5" width="9.5" height="9.5"/><rect x="17.5" y="17.5" width="9.5" height="9.5"/><path d="M11.5 6.75 h6 M14.5 6.75 v10.75 M6.75 11.5 v6 M22.25 11.5 v6 M11.5 22.25 h6"/></g></svg>
<div style="left:1120px;top:24px;width:1px;height:25px;background:#dcdcdc;"></div>
<svg style="left:1135px;top:22px;" width="20" height="30" viewBox="0 0 20 30"><g fill="none" stroke="#8c8c8c" stroke-width="2.4" stroke-linecap="round" stroke-linejoin="round"><path d="M16 2.5 L3.5 15 L16 27.5"/></g></svg>
<svg style="left:1175px;top:22px;" width="20" height="30" viewBox="0 0 20 30"><g fill="none" stroke="#b9b9b9" stroke-width="2.4" stroke-linecap="round" stroke-linejoin="round"><path d="M4 2.5 L16.5 15 L4 27.5"/></g></svg>
<div style="left:1240px;top:24px;width:1px;height:25px;background:#e2e2e2;"></div>
<div style="left:2219px;top:24px;width:1px;height:25px;background:#e2e2e2;"></div>
<div style="left:2499.5px;top:24px;width:1px;height:25px;background:#e2e2e2;"></div>
<div style="left:2719.6px;top:24px;width:1px;height:25px;background:#e2e2e2;"></div>
<div style="left:3044.5px;top:24px;width:1px;height:25px;background:#e2e2e2;"></div>
<span style="left:1288.5px;top:17.1px;font-size:27.5px;line-height:36px;color:#8440dd;-webkit-text-stroke:0.25px;transform:scaleX(1.1);transform-origin:left;">m</span>
<span style="left:1324.0px;top:23.5px;font-size:21.3px;line-height:28px;color:#262626;letter-spacing:0.769px;-webkit-text-stroke:0.4px;">WebViewDe...eHandler.m</span>
<span style="left:1686.0px;top:22.6px;font-size:22.5px;line-height:29px;color:#1c2b45;font-weight:700;transform:scaleX(0.92);transform-origin:left;">C</span>
<span style="left:1700.8px;top:22.9px;font-size:13.049999999999999px;line-height:17px;color:#1c2b45;font-weight:700;">+</span>
<span style="left:1715.5px;top:23.5px;font-size:21.3px;line-height:28px;color:#1677f2;font-style:italic;letter-spacing:1.103px;-webkit-text-stroke:0.4px;">RenderObject.cpp</span>
<span style="left:1999.5px;top:17.9px;font-size:29px;line-height:38px;color:#5a5a5a;-webkit-text-stroke:0.25px;">h</span>
<span style="left:2028.0px;top:23.5px;font-size:21.3px;line-height:28px;color:#262626;letter-spacing:0.914px;-webkit-text-stroke:0.4px;">BaseHandler.h</span>
<span style="left:2268.2px;top:17.1px;font-size:27.5px;line-height:36px;color:#8440dd;-webkit-text-stroke:0.25px;transform:scaleX(1.1);transform-origin:left;">m</span>
<span style="left:2303.0px;top:23.5px;font-size:21.3px;line-height:28px;color:#262626;letter-spacing:0.853px;-webkit-text-stroke:0.4px;">BaseHandler.m</span>
<svg style="left:2551px;top:25px;" width="22" height="26" viewBox="0 0 22 26"><g fill="none" stroke="#6b6b6b" stroke-width="1.9" stroke-linecap="round" stroke-linejoin="round"><path d="M2 4.5 a2.5 2.5 0 0 1 2.5 -2.5 H11.5 L19 9.5 V20.5 a2.5 2.5 0 0 1 -2.5 2.5 H4.5 a2.5 2.5 0 0 1 -2.5 -2.5 Z M11.5 2 V9.5 H19"/></g></svg>
<span style="left:2583.0px;top:23.5px;font-size:21.3px;line-height:28px;color:#262626;letter-spacing:0.802px;-webkit-text-stroke:0.4px;">No Editor</span>
<span style="left:2773.4px;top:22.6px;font-size:22.5px;line-height:29px;color:#1c2b45;font-weight:700;transform:scaleX(0.92);transform-origin:left;">C</span>
<span style="left:2788.2px;top:22.9px;font-size:13.049999999999999px;line-height:17px;color:#1c2b45;font-weight:700;">+</span>
<span style="left:2803.8px;top:23.5px;font-size:21.3px;line-height:28px;color:#262626;letter-spacing:0.852px;-webkit-text-stroke:0.4px;">WebPageProxy.cpp</span>
<div style="left:3264px;top:10px;width:12px;height:55px;background:linear-gradient(90deg,rgba(255,255,255,0),#dadada);"></div>
<span style="left:3096.5px;top:17.9px;font-size:29px;line-height:38px;color:#5a5a5a;-webkit-text-stroke:0.25px;">h</span>
<span style="left:3127.8px;top:23.5px;font-size:21.3px;line-height:28px;color:#262626;letter-spacing:0.693px;-webkit-text-stroke:0.4px;">WKWebView.h</span>
<div style="left:3276px;top:10px;width:180px;height:55px;background:#fff;"></div>
<svg style="left:3290px;top:24px;" width="28" height="26" viewBox="0 0 28 26"><g fill="none" stroke="#8a8a8a" stroke-width="1.9" stroke-linecap="round" stroke-linejoin="round"><path d="M3 8 H24 M18 2.5 L24 8 L18 13.5 M25 18.5 H4 M10 13 L4 18.5 L10 24"/></g></svg>
<svg style="left:3335px;top:24px;" width="40" height="26" viewBox="0 0 40 26"><g fill="none" stroke="#8a8a8a" stroke-width="1.8" stroke-linecap="round" stroke-linejoin="round"><path d="M2 3 h16 M2 9.5 h16 M2 16 h16 M2 22.5 h16"/><rect x="23" y="2" width="14" height="21.5" rx="2"/><rect x="28" y="5.5" width="4.5" height="14.5"/></g></svg>
<div style="left:3392px;top:24px;width:1px;height:25px;background:#dcdcdc;"></div>
<svg style="left:3411px;top:24px;" width="28" height="27" viewBox="0 0 28 27"><g fill="none" stroke="#8a8a8a" stroke-width="1.9" stroke-linecap="round" stroke-linejoin="round"><rect x="1.5" y="1.5" width="24.5" height="23.5" rx="4"/><path d="M9.5 1.5 V25 M13.5 13.25 H22 M17.75 9 V17.5"/></g></svg>
<div style="left:1058px;top:120px;width:2398px;height:1.5px;background:#dcdcdc;"></div>
<svg style="left:1074px;top:80px;" width="26" height="26" viewBox="0 0 26 26"><rect x="1" y="1" width="23.5" height="23.5" rx="5" fill="#2f8af5"/><rect x="3.2" y="3.2" width="19.1" height="19.1" rx="3" fill="none" stroke="#cfe4ff" stroke-width="1.3"/><path d="M8 18 L12.75 7.5 L17.5 18 M6.5 15.2 H19" stroke="#fff" stroke-width="1.8" fill="none" stroke-linecap="round"/></svg>
<span style="left:1112.0px;top:78.6px;font-size:22px;line-height:29px;color:#2a2a2a;letter-spacing:0.210px;-webkit-text-stroke:0.4px;">WebCore</span>
<svg style="left:1218px;top:82px;" width="12" height="22" viewBox="0 0 12 22"><g fill="none" stroke="#7c7c7c" stroke-width="2.3" stroke-linecap="round" stroke-linejoin="round"><path d="M3 2.2 L8.2 11 L3 19.8"/></g></svg>
<svg style="left:1245px;top:82px;" width="25" height="21" viewBox="0 0 25 21"><path d="M0 3 a2.5 2.5 0 0 1 2.5 -2.5 H8.5 l2.5 2.5 H21.5 a2.5 2.5 0 0 1 2.5 2.5 V17 a2.5 2.5 0 0 1 -2.5 2.5 H2.5 a2.5 2.5 0 0 1 -2.5 -2.5 Z" fill="#8e8e8e"/><path d="M0 7.2 H24" stroke="#fff" stroke-width="1.2"/></svg>
<span style="left:1281.4px;top:78.6px;font-size:22px;line-height:29px;color:#2a2a2a;letter-spacing:0.627px;-webkit-text-stroke:0.4px;">rendering</span>
<svg style="left:1392px;top:82px;" width="12" height="22" viewBox="0 0 12 22"><g fill="none" stroke="#7c7c7c" stroke-width="2.3" stroke-linecap="round" stroke-linejoin="round"><path d="M3 2.2 L8.2 11 L3 19.8"/></g></svg>
<span style="left:1423.6px;top:78.4px;font-size:22.5px;line-height:29px;color:#1c2b45;font-weight:700;transform:scaleX(0.92);transform-origin:left;">C</span>
<span style="left:1438.4px;top:78.7px;font-size:13.049999999999999px;line-height:17px;color:#1c2b45;font-weight:700;">+</span>
<span style="left:1456.0px;top:78.6px;font-size:22px;line-height:29px;color:#2a2a2a;letter-spacing:0.654px;-webkit-text-stroke:0.4px;">RenderObject.cpp</span>
<svg style="left:1656px;top:82px;" width="12" height="22" viewBox="0 0 12 22"><g fill="none" stroke="#7c7c7c" stroke-width="2.3" stroke-linecap="round" stroke-linejoin="round"><path d="M3 2.2 L8.2 11 L3 19.8"/></g></svg>
<div style="left:1679.5px;top:76px;width:31px;height:32px;background:#1a78f0;border-radius:7px;"></div>
<span style="left:1685.5px;top:77.2px;font-size:23px;line-height:30px;color:#fff;font-weight:700;">M</span>
<span style="left:1720.0px;top:78.6px;font-size:22px;line-height:29px;color:#2a2a2a;letter-spacing:0.730px;-webkit-text-stroke:0.4px;">RenderObject::RenderObject(type, node, typeFlags, typeSpecificFlags)</span>
<svg style="left:3366px;top:81px;" width="14" height="26" viewBox="0 0 14 26"><g fill="none" stroke="#8a8a8a" stroke-width="2" stroke-linecap="round" stroke-linejoin="round"><path d="M11.5 2 L2.5 13 L11.5 24"/></g></svg>
<svg style="left:3390.5px;top:81.5px;" width="23" height="22" viewBox="0 0 23 22"><path d="M11.5 3 L20.8 19 H2.2 Z" fill="#f5b70a" stroke="#f5b70a" stroke-width="3.4" stroke-linejoin="round"/><path d="M11.5 7.5 v6.2" stroke="#fff" stroke-width="2.4" stroke-linecap="round"/><circle cx="11.5" cy="17.2" r="1.4" fill="#fff"/></svg>
<svg style="left:3424px;top:81px;" width="14" height="26" viewBox="0 0 14 26"><g fill="none" stroke="#8a8a8a" stroke-width="2" stroke-linecap="round" stroke-linejoin="round"><path d="M2.5 2 L11.5 13 L2.5 24"/></g></svg>
<div style="left:2925.6px;top:640px;width:531px;height:42px;background:#aae5b2;border-radius:7px 0 0 7px;"></div>
<div style="left:2991px;top:640px;width:2px;height:42px;background:#c9efce;"></div>
<svg style="left:2946px;top:652px;" width="29" height="18" viewBox="0 0 29 18"><g fill="none" stroke="#4d7f55" stroke-width="1.6" stroke-linecap="round" stroke-linejoin="round"><path d="M2 3 h25 M2 9 h25 M2 15 h25"/></g></svg>
<span style="left:3007.5px;top:642.7px;font-size:31px;line-height:40px;color:#14301a;letter-spacing:0.319px;-webkit-text-stroke:0.5px #14301a;">Thread 1: breakpoint 2.1 (2)</span>
<div style="left:1058px;top:1140px;width:2398px;height:406px;background:#fff;"></div>
<div style="left:1058px;top:1140px;width:2398px;height:1.5px;background:#dadada;"></div>
<div style="left:1058px;top:1195.5px;width:2398px;height:1.5px;background:#e2e2e2;"></div>
<svg style="left:1080px;top:1160px;" width="30" height="18" viewBox="0 0 30 18"><path d="M4 0 H21.5 Q23.6 0 24.8 1.6 L28.6 6.6 Q29.6 8.8 28.6 11 L24.8 16 Q23.6 17.6 21.5 17.6 H4 a4 4 0 0 1 -4 -4 V4 a4 4 0 0 1 4 -4 Z" fill="#0a72f5"/></svg>
<div style="left:1125.5px;top:1156px;width:1px;height:26px;background:#dedede;"></div>
<div style="left:1367px;top:1156px;width:1px;height:26px;background:#dedede;"></div>
<div style="left:1610px;top:1156px;width:1px;height:26px;background:#dedede;"></div>
<svg style="left:1141px;top:1156px;" width="32" height="26" viewBox="0 0 32 26"><g fill="none" stroke="#7e7e7e" stroke-width="1.9" stroke-linecap="round" stroke-linejoin="round"><rect x="2" y="2" width="6" height="21" rx="0.8"/><path d="M14 2.5 L28.5 12.5 L14 22.5 Z"/></g></svg>
<svg style="left:1203px;top:1157px;" width="30" height="26" viewBox="0 0 30 26"><g fill="none" stroke="#7e7e7e" stroke-width="1.9" stroke-linecap="round" stroke-linejoin="round"><path d="M2.5 13.5 L13.5 3.5 L24.5 13"/><path d="M25 6.5 V13.3 H18"/><rect x="5.5" y="18.5" width="15.5" height="4" rx="0.6"/></g></svg>
<svg style="left:1266px;top:1155px;" width="22" height="28" viewBox="0 0 22 28"><g fill="none" stroke="#7e7e7e" stroke-width="1.9" stroke-linecap="round" stroke-linejoin="round"><path d="M11 2 V16 M4.5 10.5 L11 17 L17.5 10.5"/><rect x="2" y="21" width="18" height="4.5" rx="0.8"/></g></svg>
<svg style="left:1326px;top:1155px;" width="22" height="28" viewBox="0 0 22 28"><g fill="none" stroke="#7e7e7e" stroke-width="1.9" stroke-linecap="round" stroke-linejoin="round"><path d="M11 17 V3 M4.5 8.5 L11 2 L17.5 8.5"/><rect x="2" y="21" width="18" height="4.5" rx="0.8"/></g></svg>
<svg style="left:1386px;top:1156px;" width="28" height="26" viewBox="0 0 28 26"><g fill="none" stroke="#7e7e7e" stroke-width="1.8" stroke-linecap="round" stroke-linejoin="round"><rect x="2" y="2" width="23" height="5" rx="1.5"/><rect x="2" y="10.5" width="23" height="5" rx="1.5"/><rect x="2" y="19" width="23" height="5" rx="1.5"/></g></svg>
<svg style="left:1447px;top:1155px;" width="25" height="28" viewBox="0 0 25 28"><g fill="none" stroke="#7e7e7e" stroke-width="1.8" stroke-linecap="round" stroke-linejoin="round"><path d="M9 9 L20.5 4.5 V20 L9 25.5 Z"/><path d="M5.5 21.5 V7 L16 3 M2 18.5 V5 L12 1.5"/></g></svg>
<svg style="left:1504px;top:1155px;" width="30" height="28" viewBox="0 0 30 28"><g fill="none" stroke="#7e7e7e" stroke-width="1.8" stroke-linecap="round" stroke-linejoin="round"><circle cx="6" cy="5.5" r="3.6"/><circle cx="24" cy="13.5" r="3.6"/><circle cx="6" cy="22" r="3.6"/><path d="M9.3 7 L20.6 12 M9.3 20.5 L20.6 15"/></g></svg>
<svg style="left:1567px;top:1155px;" width="25" height="28" viewBox="0 0 25 28"><g fill="none" stroke="#7e7e7e" stroke-width="1.8" stroke-linecap="round" stroke-linejoin="round"><rect x="1.5" y="2" width="21" height="10" rx="5"/><rect x="1.5" y="15.5" width="21" height="10" rx="5"/><circle cx="7" cy="7" r="2.6" fill="#7e7e7e"/><circle cx="17" cy="20.5" r="2.6" fill="#7e7e7e"/></g></svg>
<svg style="left:1628px;top:1158.5px;" width="26" height="19.5" viewBox="0 0 26 19.5"><rect width="25.5" height="19" rx="3.5" fill="#111"/><path d="M4.5 5 l3.5 2.6 l-3.5 2.6 M10 10.5 h5" stroke="#fff" stroke-width="1.5" fill="none"/></svg>
<span style="left:1665.5px;top:1154.9px;font-size:22.5px;line-height:29px;color:#2a2a2a;letter-spacing:0.334px;-webkit-text-stroke:0.4px;">com.apple.WebKit.WebContent</span>
<svg style="left:1997px;top:1157.5px;" width="12" height="22" viewBox="0 0 12 22"><g fill="none" stroke="#7c7c7c" stroke-width="2.3" stroke-linecap="round" stroke-linejoin="round"><path d="M3 2.2 L8.2 11 L3 19.8"/></g></svg>
<svg style="left:2020.8px;top:1152.5px;" width="32" height="32" viewBox="0 0 32 32"><circle cx="16" cy="16" r="16" fill="#1b6ff2"/><path d="M11.5 8 v16 M16 6.5 v19 M20.5 8 v16" stroke="#fff" stroke-width="1.8" stroke-linecap="round"/></svg>
<span style="left:2062.0px;top:1154.9px;font-size:22.5px;line-height:29px;color:#2a2a2a;letter-spacing:-0.183px;-webkit-text-stroke:0.4px;">Thread 1</span>
<svg style="left:2161px;top:1157.5px;" width="12" height="22" viewBox="0 0 12 22"><g fill="none" stroke="#7c7c7c" stroke-width="2.3" stroke-linecap="round" stroke-linejoin="round"><path d="M3 2.2 L8.2 11 L3 19.8"/></g></svg>
<svg style="left:2184.8px;top:1152.5px;" width="32" height="32" viewBox="0 0 32 32"><rect width="32" height="32" rx="7" fill="#18b9cd"/><g fill="none" stroke="#fff" stroke-width="1.9"><circle cx="16" cy="16" r="11"/><ellipse cx="16" cy="16" rx="5" ry="11"/><path d="M5 16 H27 M16 5 V27 M7 10.2 Q16 13.6 25 10.2 M7 21.8 Q16 18.4 25 21.8"/></g></svg>
<span style="left:2225.8px;top:1154.9px;font-size:22.5px;line-height:29px;color:#2a2a2a;letter-spacing:0.383px;-webkit-text-stroke:0.4px;">0 WebCore::RenderObject::RenderObject</span>
<span style="left:3234.8px;top:1154.9px;font-size:22.5px;line-height:29px;color:#828282;letter-spacing:0.824px;-webkit-text-stroke:0.4px #828282;">4 characters</span>
<div style="left:3387.4px;top:1156px;width:1px;height:26px;background:#dedede;"></div>
<svg style="left:3404px;top:1155px;" width="29" height="28" viewBox="0 0 29 28"><g fill="none" stroke="#7e7e7e" stroke-width="1.9" stroke-linecap="round" stroke-linejoin="round"><rect x="2" y="2" width="24.5" height="23" rx="4.5"/><rect x="6" y="16.5" width="16.5" height="5" rx="1.2" fill="#7e7e7e"/></g></svg>
<div style="left:1883px;top:1197px;width:2px;height:349px;background:#c6cace;"></div>
<svg style="left:1087px;top:1216px;" width="16" height="20" viewBox="0 0 16 20"><g fill="none" stroke="#6a6a6a" stroke-width="2.5" stroke-linecap="round" stroke-linejoin="round"><path d="M4 3 L11.5 10 L4 17"/></g></svg>
<div style="left:1113px;top:1210px;width:32px;height:32px;background:#cb53db;border-radius:7px;"></div>
<span style="left:1120.6px;top:1209.9px;font-size:25px;line-height:32px;color:#fff;font-weight:700;transform:scaleX(0.95);transform-origin:left;">A</span>
<span style="left:1151.9px;top:1211.7px;font-size:22.5px;line-height:29px;color:#1e1e1e;font-weight:700;letter-spacing:0.071px;">this</span>
<span style="left:1200.6px;top:1211.7px;font-size:22.5px;line-height:29px;color:#3a3a3a;-webkit-text-stroke:0.4px;">=</span>
<span style="left:1220.8px;top:1213.4px;font-size:20.5px;line-height:27px;color:#3a3a3a;letter-spacing:0.415px;-webkit-text-stroke:0.4px;">(WebCore::RenderObject *)</span>
<span style="left:1491.6px;top:1211.7px;font-size:22.5px;line-height:29px;color:#1e1e1e;letter-spacing:1.183px;-webkit-text-stroke:0.4px;">0x13800d530</span>
<div style="left:1113px;top:1246px;width:32px;height:32px;background:#cb53db;border-radius:7px;"></div>
<span style="left:1120.6px;top:1245.9px;font-size:25px;line-height:32px;color:#fff;font-weight:700;transform:scaleX(0.95);transform-origin:left;">A</span>
<span style="left:1151.9px;top:1247.7px;font-size:22.5px;line-height:29px;color:#1e1e1e;font-weight:700;letter-spacing:0.459px;">type</span>
<span style="left:1208.5px;top:1247.7px;font-size:22.5px;line-height:29px;color:#3a3a3a;-webkit-text-stroke:0.4px;">=</span>
<span style="left:1228.6px;top:1249.4px;font-size:20.5px;line-height:27px;color:#3a3a3a;letter-spacing:0.390px;-webkit-text-stroke:0.4px;">(WebCore::RenderObject::Type)</span>
<span style="left:1542.2px;top:1247.7px;font-size:22.5px;line-height:29px;color:#1e1e1e;letter-spacing:0.241px;-webkit-text-stroke:0.4px;">BlockFlow</span>
<svg style="left:1087px;top:1288px;" width="16" height="20" viewBox="0 0 16 20"><g fill="none" stroke="#6a6a6a" stroke-width="2.5" stroke-linecap="round" stroke-linejoin="round"><path d="M4 3 L11.5 10 L4 17"/></g></svg>
<div style="left:1113px;top:1282px;width:32px;height:32px;background:#cb53db;border-radius:7px;"></div>
<span style="left:1120.6px;top:1281.9px;font-size:25px;line-height:32px;color:#fff;font-weight:700;transform:scaleX(0.95);transform-origin:left;">A</span>
<span style="left:1151.9px;top:1283.7px;font-size:22.5px;line-height:29px;color:#1e1e1e;font-weight:700;letter-spacing:-0.088px;">node</span>
<span style="left:1213.8px;top:1283.7px;font-size:22.5px;line-height:29px;color:#3a3a3a;-webkit-text-stroke:0.4px;">=</span>
<span style="left:1234.2px;top:1285.4px;font-size:20.5px;line-height:27px;color:#3a3a3a;letter-spacing:0.372px;-webkit-text-stroke:0.4px;">(WebCore::HTMLHtmlElement &amp;)</span>
<span style="left:1557.8px;top:1283.7px;font-size:22.5px;line-height:29px;color:#1e1e1e;letter-spacing:1.306px;-webkit-text-stroke:0.4px;">0x0000000138005890</span>
<svg style="left:1087px;top:1324px;" width="16" height="20" viewBox="0 0 16 20"><g fill="none" stroke="#6a6a6a" stroke-width="2.5" stroke-linecap="round" stroke-linejoin="round"><path d="M4 3 L11.5 10 L4 17"/></g></svg>
<div style="left:1113px;top:1318px;width:32px;height:32px;background:#cb53db;border-radius:7px;"></div>
<span style="left:1120.6px;top:1317.9px;font-size:25px;line-height:32px;color:#fff;font-weight:700;transform:scaleX(0.95);transform-origin:left;">A</span>
<span style="left:1151.4px;top:1319.7px;font-size:22.5px;line-height:29px;color:#1e1e1e;font-weight:700;letter-spacing:0.130px;">typeFlags</span>
<span style="left:1265.5px;top:1319.7px;font-size:22.5px;line-height:29px;color:#3a3a3a;-webkit-text-stroke:0.4px;">=</span>
<span style="left:1285.5px;top:1321.4px;font-size:20.5px;line-height:27px;color:#3a3a3a;letter-spacing:0.133px;-webkit-text-stroke:0.4px;">(WTF::OptionSet&lt;WebCore::RenderObject::TypeFlag&gt;)</span>
<span style="left:1804.5px;top:1319.7px;font-size:22.5px;line-height:29px;color:#1e1e1e;letter-spacing:-0.347px;-webkit-text-stroke:0.4px;">{ s...</span>
<svg style="left:1087px;top:1360px;" width="16" height="20" viewBox="0 0 16 20"><g fill="none" stroke="#6a6a6a" stroke-width="2.5" stroke-linecap="round" stroke-linejoin="round"><path d="M4 3 L11.5 10 L4 17"/></g></svg>
<div style="left:1113px;top:1354px;width:32px;height:32px;background:#cb53db;border-radius:7px;"></div>
<span style="left:1120.6px;top:1353.9px;font-size:25px;line-height:32px;color:#fff;font-weight:700;transform:scaleX(0.95);transform-origin:left;">A</span>
<span style="left:1151.4px;top:1355.7px;font-size:22.5px;line-height:29px;color:#1e1e1e;font-weight:700;letter-spacing:0.457px;">typeSpecificFlags</span>
<span style="left:1359.5px;top:1357.4px;font-size:20.5px;line-height:27px;color:#3a3a3a;letter-spacing:0.429px;-webkit-text-stroke:0.4px;">(WebCore::RenderObject::TypeSpecificFlags)</span>
<svg style="left:1087px;top:1396px;" width="16" height="20" viewBox="0 0 16 20"><g fill="none" stroke="#6a6a6a" stroke-width="2.5" stroke-linecap="round" stroke-linejoin="round"><path d="M4 3 L11.5 10 L4 17"/></g></svg>
<div style="left:1113px;top:1390px;width:32px;height:32px;background:#31b73f;border-radius:7px;"></div>
<span style="left:1121.0px;top:1389.9px;font-size:25px;line-height:32px;color:#fff;font-weight:700;transform:scaleX(0.97);transform-origin:left;">V</span>
<span style="left:1151.4px;top:1391.7px;font-size:22.5px;line-height:29px;color:#1e1e1e;font-weight:700;letter-spacing:0.418px;">WebCore::RenderModel::s_heapRef</span>
<span style="left:1558.0px;top:1391.7px;font-size:22.5px;line-height:29px;color:#3a3a3a;-webkit-text-stroke:0.4px;">=</span>
<span style="left:1577.5px;top:1393.4px;font-size:20.5px;line-height:27px;color:#3a3a3a;letter-spacing:0.424px;-webkit-text-stroke:0.4px;">(bmalloc::api::HeapRef)</span>
<span style="left:1811.6px;top:1391.7px;font-size:22.5px;line-height:29px;color:#1e1e1e;letter-spacing:0.540px;-webkit-text-stroke:0.4px;">0x0</span>
<svg style="left:1087px;top:1432px;" width="16" height="20" viewBox="0 0 16 20"><g fill="none" stroke="#6a6a6a" stroke-width="2.5" stroke-linecap="round" stroke-linejoin="round"><path d="M4 3 L11.5 10 L4 17"/></g></svg>
<div style="left:1113px;top:1426px;width:32px;height:32px;background:#31b73f;border-radius:7px;"></div>
<span style="left:1121.0px;top:1425.9px;font-size:25px;line-height:32px;color:#fff;font-weight:700;transform:scaleX(0.97);transform-origin:left;">V</span>
<span style="left:1151.4px;top:1427.7px;font-size:22.5px;line-height:29px;color:#1e1e1e;font-weight:700;letter-spacing:0.451px;">WebCore::RenderModel::s_heapSpec</span>
<span style="left:1576.0px;top:1429.4px;font-size:20.5px;line-height:27px;color:#3a3a3a;letter-spacing:0.609px;-webkit-text-stroke:0.4px;">(const TZoneSpecification)</span>
<svg style="left:1087px;top:1468px;" width="16" height="20" viewBox="0 0 16 20"><g fill="none" stroke="#6a6a6a" stroke-width="2.5" stroke-linecap="round" stroke-linejoin="round"><path d="M4 3 L11.5 10 L4 17"/></g></svg>
<div style="left:1113px;top:1462px;width:32px;height:32px;background:#31b73f;border-radius:7px;"></div>
<span style="left:1121.0px;top:1461.9px;font-size:25px;line-height:32px;color:#fff;font-weight:700;transform:scaleX(0.97);transform-origin:left;">V</span>
<span style="left:1151.4px;top:1463.7px;font-size:22.5px;line-height:29px;color:#1e1e1e;font-weight:700;letter-spacing:0.092px;">WebCore::RenderMultiColumnFlow::s_heapRef</span>
<span style="left:1670.8px;top:1463.7px;font-size:22.5px;line-height:29px;color:#3a3a3a;-webkit-text-stroke:0.4px;">=</span>
<span style="left:1689.8px;top:1465.4px;font-size:20.5px;line-height:27px;color:#3a3a3a;letter-spacing:0.122px;-webkit-text-stroke:0.4px;">(bmalloc::api::...</span>
<svg style="left:1087px;top:1504px;" width="16" height="20" viewBox="0 0 16 20"><g fill="none" stroke="#6a6a6a" stroke-width="2.5" stroke-linecap="round" stroke-linejoin="round"><path d="M4 3 L11.5 10 L4 17"/></g></svg>
<div style="left:1113px;top:1498px;width:32px;height:32px;background:#31b73f;border-radius:7px;"></div>
<span style="left:1121.0px;top:1497.9px;font-size:25px;line-height:32px;color:#fff;font-weight:700;transform:scaleX(0.97);transform-origin:left;">V</span>
<span style="left:1151.4px;top:1499.7px;font-size:22.5px;line-height:29px;color:#1e1e1e;font-weight:700;letter-spacing:0.102px;">WebCore::RenderMultiColumnFlow::s_heapSpec</span>
<span style="left:1688.9px;top:1501.4px;font-size:20.5px;line-height:27px;color:#3a3a3a;letter-spacing:0.027px;-webkit-text-stroke:0.4px;">(const TZoneS...</span>
<svg style="left:1087px;top:1540px;" width="16" height="20" viewBox="0 0 16 20"><g fill="none" stroke="#6a6a6a" stroke-width="2.5" stroke-linecap="round" stroke-linejoin="round"><path d="M4 3 L11.5 10 L4 17"/></g></svg>
<div style="left:1113px;top:1534px;width:32px;height:32px;background:#31b73f;border-radius:7px;"></div>
<span style="left:1121.0px;top:1533.9px;font-size:25px;line-height:32px;color:#fff;font-weight:700;transform:scaleX(0.97);transform-origin:left;">V</span>
<span style="left:1151.4px;top:1535.7px;font-size:22.5px;line-height:29px;color:#1e1e1e;font-weight:700;letter-spacing:0.193px;">WebCore::RenderMultiColumnSet::s_heapRef</span>
<span style="left:1658.5px;top:1535.7px;font-size:22.5px;line-height:29px;color:#3a3a3a;-webkit-text-stroke:0.4px;">=</span>
<span style="left:1677.5px;top:1537.4px;font-size:20.5px;line-height:27px;color:#3a3a3a;letter-spacing:-0.053px;-webkit-text-stroke:0.4px;">(bmalloc::api::H...</span>
<div style="left:1885px;top:1197px;width:1571px;height:278px;background:#e9eff6;"></div>
<span class="co" style="top:1210.3px;"><span style="color:#3f8ca3">(lldb)</span> p node.nodeName()</span>
<span class="co" style="top:1254.3px;">(WTF::String) { length = 4, contents = 'HTML' } {</span>
<span class="co" style="top:1298.3px;">  m_impl = {</span>
<span class="co" style="top:1342.3px;">    m_ptr = 0x0000000136000120 { length = 4, is8bit = 1, contents = 'HTML' }</span>
<span class="co" style="top:1386.3px;">  }</span>
<span class="co" style="top:1430.3px;">}</span>
<div style="left:3251px;top:1323.7px;width:98.69999999999982px;height:61.799999999999955px;border:7px solid #e8212b;border-radius:5px;"></div>
</div></body></html>
